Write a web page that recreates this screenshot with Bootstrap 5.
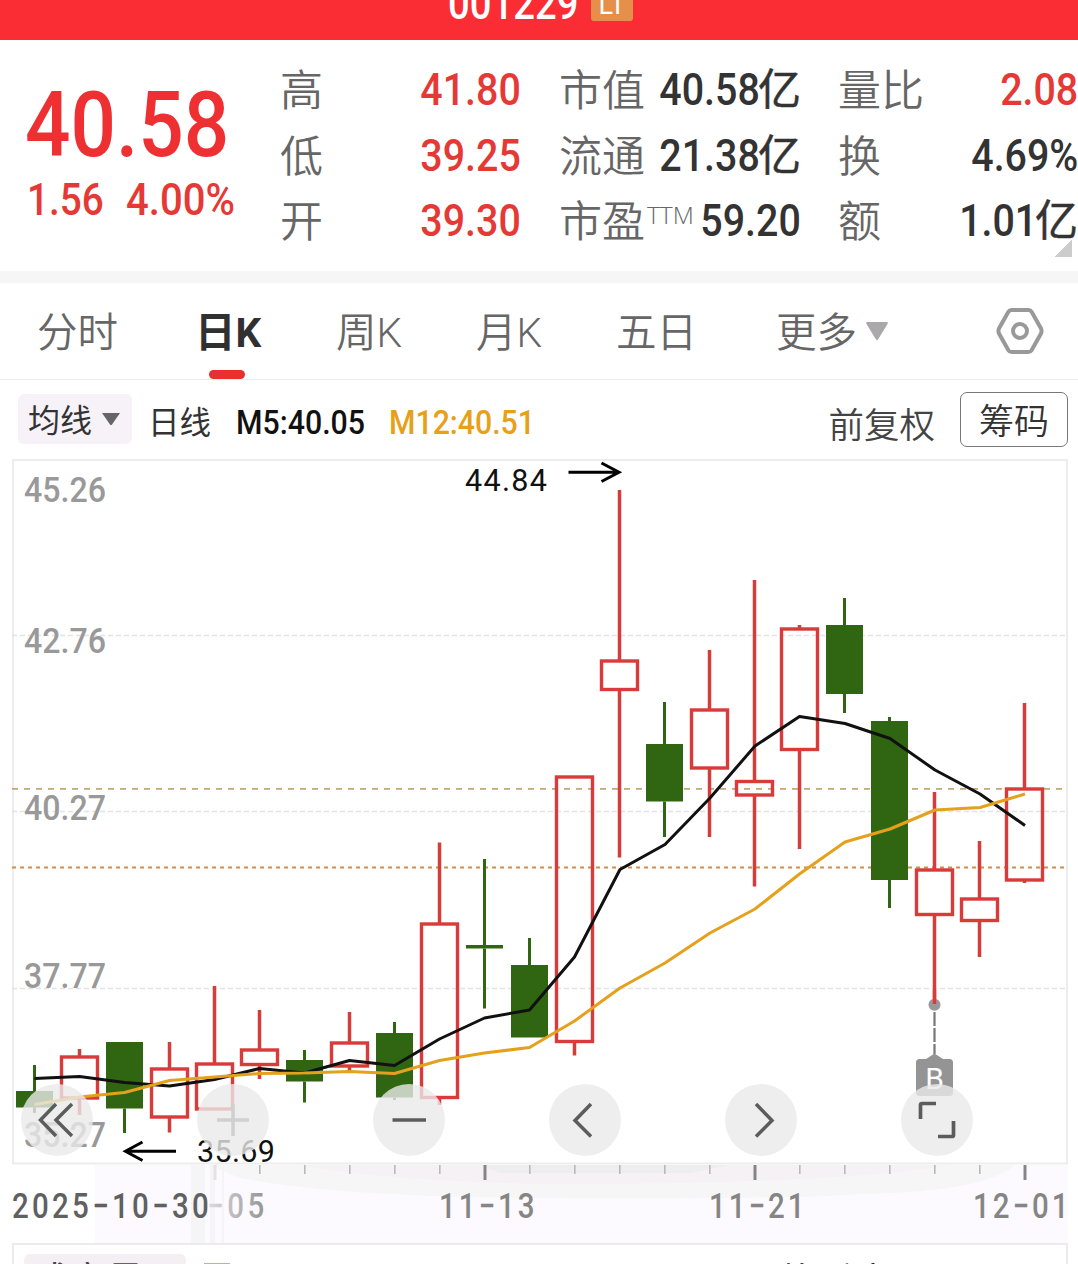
<!DOCTYPE html>
<html lang="zh-CN">
<head>
<meta charset="utf-8">
<meta name="viewport" content="width=device-width, initial-scale=1">
<title>001229</title>
<link href="https://cdn.jsdelivr.net/npm/bootstrap@5.3.0/dist/css/bootstrap.min.css" rel="stylesheet">
<style>
body{width:1078px;height:1264px;overflow:hidden;background:#fff;color:#333;font-family:Roboto,"Noto Sans CJK SC",sans-serif}
.topbar{height:40px;background:#f92d33;color:#fff}
.code{font-size:45px;line-height:52px;margin:-22px 0 0 448px;width:130px;white-space:nowrap}
.code .num{transform:scaleX(.85)}
.lt-tag{width:42px;height:26px;margin:-5px 0 0 13px;background:#e58f4a;border-radius:3px;font-size:27px;line-height:20px;text-align:center}
.num{display:inline-block;transform:scaleX(.89);transform-origin:right center;font-weight:500;white-space:nowrap}
.num-l{transform-origin:left center}
.up{color:#e53935}
.quote{height:231px}
.price-box{width:280px;padding:36px 0 0 25px}
.price{font-size:90px;line-height:100px;height:100px;color:#ef3032}
.chg{font-size:45px;line-height:48px;width:99px;padding-left:2px}
.stat-col{font-size:43px;padding-top:17px}
.stat-row{height:65.5px;line-height:65.5px;white-space:nowrap}
.stat-row .num{font-size:45px;transform:scaleX(.875)}
.k{color:#666;font-weight:350;position:relative;top:2px}
.v{font-weight:500}
.yi{font-weight:400;display:inline-block;margin-left:-2px;line-height:60px;-webkit-text-stroke:.5px #333}
.ttm{font-size:24.500px;line-height:23px;top:-13px;font-family:"Open Sans",sans-serif;font-weight:300;margin-left:2px}
.fold{width:17px;height:17px;right:6px;bottom:14px;background:linear-gradient(135deg,transparent 50%,#ccc 50%)}
.divide{height:12px;background:#f6f6f6}
.tabs-row{height:97px;border-bottom:1px solid #ececec;padding-left:37px;font-size:40.5px;line-height:101px;color:#666;font-weight:350}
.tab-now{color:#303030;font-weight:700;left:-2px}
.tab-now::after{content:"";position:absolute;left:14px;bottom:0;width:36px;height:9px;border-radius:5px;background:#e93030}
.tools{height:79px;font-size:32px;padding-right:10px}
.ma-pill{width:114px;height:50px;margin:14px 0 0 18px;padding-left:10px;border-radius:6px;background:#f6f2f7;line-height:54px}
.chip{width:108px;height:55px;margin-top:12px;border:1px solid #777;border-radius:7px;font-size:35px;line-height:60px;text-align:center}
.plot{height:784px}
.ctl-bar{left:21px;top:625px;gap:104px}
.ctl{width:72px;height:72px;border-radius:50%;border:0;padding:0;background:rgba(234,234,234,.8)}
.ctl svg{display:block}
.next-pane{height:21px;margin:0 10px 0 12px;border:solid #eceaec;border-width:2px 2px 0}
.pane-pill{width:162px;height:40px;margin:9px 0 0 10px;padding-left:9px;background:#f4eff3;border-radius:6px;font-size:37px;line-height:56px;color:#444}
svg text{font-family:Roboto,"Noto Sans",sans-serif}
</style>
<script src="https://cdn.jsdelivr.net/npm/bootstrap@5.3.0/dist/js/bootstrap.bundle.min.js"></script>
</head>
<body>
<header class="topbar d-flex overflow-hidden">
  <div class="code"><span class="num num-l">001229</span></div>
  <div class="lt-tag">LT</div>
</header>

<section class="quote d-flex position-relative">
  <div class="price-box flex-shrink-0">
    <div class="price"><span class="num num-l">40.58</span></div>
    <div class="d-flex up">
      <div class="chg"><span class="num num-l" style="transform:scaleX(.86)">1.56</span></div>
      <div class="chg"><span class="num num-l">4.00%</span></div>
    </div>
  </div>
  <div class="stat-col flex-shrink-0" style="width:241px">
    <div class="stat-row d-flex justify-content-between"><span class="k">高</span><span class="num up">41.80</span></div>
    <div class="stat-row d-flex justify-content-between"><span class="k">低</span><span class="num up">39.25</span></div>
    <div class="stat-row d-flex justify-content-between"><span class="k">开</span><span class="num up">39.30</span></div>
  </div>
  <div class="stat-col flex-shrink-0" style="width:242px;margin-left:38px">
    <div class="stat-row d-flex justify-content-between"><span class="k">市值</span><span class="v"><span class="num">40.58</span><span class="yi">亿</span></span></div>
    <div class="stat-row d-flex justify-content-between"><span class="k">流通</span><span class="v"><span class="num">21.38</span><span class="yi">亿</span></span></div>
    <div class="stat-row d-flex justify-content-between"><span class="k">市盈<span class="ttm position-relative">TTM</span></span><span class="num" style="margin-left:-20px">59.20</span></div>
  </div>
  <div class="stat-col flex-shrink-0" style="width:240px;margin-left:37px">
    <div class="stat-row d-flex justify-content-between"><span class="k">量比</span><span class="num up">2.08</span></div>
    <div class="stat-row d-flex justify-content-between"><span class="k">换</span><span class="num">4.69%</span></div>
    <div class="stat-row d-flex justify-content-between"><span class="k">额</span><span class="v"><span class="num">1.01</span><span class="yi">亿</span></span></div>
  </div>
  <i class="fold position-absolute"></i>
</section>
<div class="divide"></div>

<nav class="tabs-row d-flex text-nowrap">
  <div style="width:160px">分时</div>
  <div style="width:139px" class="tab-now position-relative">日K</div>
  <div style="width:140px">周K</div>
  <div style="width:140px">月K</div>
  <div style="width:160px">五日</div>
  <div style="width:220px" class="d-flex align-items-start"><span>更多</span><svg width="24" height="20" style="margin:38px 0 0 8px"><path d="M2 1H22Q23.500 1 22.500 3L13 18.500Q12 20 11 18.500L1.500 3Q.5 1 2 1Z" fill="#aaa8aa"/></svg></div>
  <svg width="48" height="46" viewBox="0 0 48 46" style="margin-top:25px" fill="none" stroke="#999" stroke-width="4"><path d="M15.500 2H32.500Q34.500 2 35.600 3.800L45 20.500Q46.200 23 45 25.500L35.600 42.200Q34.500 44 32.500 44H15.500Q13.500 44 12.400 42.200L3 25.500Q1.800 23 3 20.500L12.400 3.800Q13.500 2 15.500 2Z"/><circle cx="24" cy="23" r="7"/></svg>
</nav>

<div class="tools d-flex text-nowrap">
  <div class="ma-pill d-flex"><span>均线</span><svg width="20" height="14" style="margin:18px 0 0 9px"><path d="M1 1H19L11 12.500Q10 13.500 9 12.500Z" fill="#666"/></svg></div>
  <div style="margin:20px 0 0 16px;width:89px;font-size:31.500px">日线</div>
  <svg width="310" height="60" style="margin-top:12px" font-size="33" font-weight="500"><text x="-1" y="42" textLength="129" lengthAdjust="spacingAndGlyphs" fill="#111">M5:40.05</text><text x="152" y="42" textLength="146" lengthAdjust="spacingAndGlyphs" fill="#e6a117">M12:40.51</text></svg>
  <div class="ms-auto" style="font-size:35.500px;margin-top:20px;margin-right:25px;color:#444;font-weight:350">前复权</div>
  <div class="chip" style="font-weight:350">筹码</div>
</div>

<main class="plot position-relative">
  <svg class="d-block" width="1078" height="784" viewBox="0 459 1078 784">
    <path d="M95 1165H1068V1243H95Z" fill="#fdfaff"/>
    <path d="M208 1165H1015Q985 1192 860 1194Q780 1200 520 1198Q330 1196 240 1178Z" fill="#f6f6f6"/>
    <path d="M300 1165H950Q840 1184 540 1184Q380 1180 300 1165Z" fill="#f5f1f5"/>
    <path d="M480 1165H730L690 1173H500Z" fill="#efeeef"/>
    <path d="M191 1165H205V1243H191ZM210 1165H215V1243H210ZM222 1165H224V1243H222Z" fill="#f5f4f6"/>
    <rect x="13" y="460" width="1054" height="703.500" fill="#fff" stroke="#ededed" stroke-width="2"/>
    <g stroke="#e3e3e3" stroke-width="1.300" stroke-dasharray="5 3"><path d="M12 635.500H1066M12 811.500H1066M12 988.500H1066"/></g>
    <path d="M12 788.800H1066" stroke="#c2a873" stroke-width="1.800" stroke-dasharray="6 6"/>
    <path d="M12 867.600H1066" stroke="#cd9048" stroke-width="2" stroke-dasharray="4 4"/>
    <g fill="#999" font-size="35.500" font-weight="500">
      <text x="24" y="502" textLength="82" lengthAdjust="spacingAndGlyphs">45.26</text>
      <text x="24" y="653" textLength="82" lengthAdjust="spacingAndGlyphs">42.76</text>
      <text x="24" y="820" textLength="82" lengthAdjust="spacingAndGlyphs">40.27</text>
      <text x="24" y="988" textLength="82" lengthAdjust="spacingAndGlyphs">37.77</text>
      <text x="24" y="1147" textLength="82" lengthAdjust="spacingAndGlyphs">35.27</text>
    </g>
    <g id="candles" stroke-width="3.400" fill="none"></g>
    <path fill="none" stroke="#111" stroke-width="3" stroke-linejoin="round" d="M34.500 1078.500L79.500 1076.500L124.500 1082.500L169.500 1086L214.500 1079.500L259.500 1068.500L304.500 1073L349.500 1060.500L394.500 1065.500L439.500 1039L484.500 1018L529.500 1010L574.500 957L620 869.500L665 844.500L710 798L755 746L799.500 716.500L845 723.500L890 738.500L935 770L980 794L1025 825.500"/>
    <path fill="none" stroke="#e5a01c" stroke-width="3" stroke-linejoin="round" d="M34.500 1104.500L79.500 1097L124.500 1092.500L169.500 1080.500L214.500 1077L259.500 1073.500L304.500 1073L349.500 1071.500L394.500 1073.500L439.500 1060.500L484.500 1053L529.500 1047.500L574.500 1021L620 988L665 963L710 933L755 909L799.500 874L845 842L890 829L935 810L980 807.500L1025 794"/>
    <g fill="none" stroke="#000" stroke-width="3"><path d="M568.500 472.300H618M601.500 463L619 472.300L601.500 481.500"/><path d="M176 1151.300H126M142.500 1142L125.500 1151.300L142.500 1160.500"/></g>
    <g fill="#111" font-size="30.500"><text x="465" y="490.500" textLength="82" lengthAdjust="spacing">44.84</text><text x="197" y="1161.500" textLength="78" lengthAdjust="spacing">35.69</text></g>
    <circle cx="934.500" cy="1004.800" r="6" fill="#999"/><path d="M934.500 990V1004" stroke="#d93b3a" stroke-width="3.400"/>
    <path d="M934.500 1012V1054" stroke="#777" stroke-width="2.200" stroke-dasharray="14 2"/>
    <path d="M934.500 1053.500L943 1059H949.500Q953 1059 953 1062.500V1092.500Q953 1096 949.500 1096H919.500Q916 1096 916 1092.500V1062.500Q916 1059 919.500 1059H926Z" fill="#949494"/>
    <text x="934.700" y="1088.500" font-size="30" text-anchor="middle" fill="#fff">B</text>
    <path stroke="#b9b9b9" stroke-width="1.600" d="M259.800 1165v9M304.800 1165v9M349.800 1165v9M394.800 1165v9M439.800 1165v9M529.800 1165v9M574.800 1165v9M619.800 1165v9M664.800 1165v9M709.800 1165v9M799.800 1165v9M844.800 1165v9M889.800 1165v9M934.800 1165v9M979.800 1165v9"/>
    <path stroke="#858585" stroke-width="3" d="M485 1165v15M755 1165v15M1025 1165v15"/><path stroke="#e4e2e4" stroke-width="3" d="M215 1165v15"/>
    <linearGradient id="fade" gradientUnits="userSpaceOnUse" x1="0" y1="0" x2="66" y2="0"><stop stop-color="#ddd"/><stop offset="1" stop-color="#999"/></linearGradient>
    <g font-size="35.500" fill="#858585" font-weight="500">
      <text transform="translate(12 1218) scale(.83 1)" textLength="237" fill="#606060">2025−10−30</text>
      <text transform="translate(207 1218) scale(.83 1)" textLength="69" fill="url(#fade)">−05</text>
      <text transform="translate(439 1218) scale(.83 1)" textLength="115">11−13</text>
      <text transform="translate(709 1218) scale(.83 1)" textLength="115">11−21</text>
      <text transform="translate(973 1218) scale(.83 1)" textLength="115">12−01</text>
    </g>
  </svg>
  <div class="ctl-bar position-absolute d-flex">
    <button class="ctl" aria-label="最早"><svg width="72" height="72" fill="none" stroke="#5c5c5c" stroke-width="3.500"><path d="M35 20L19.500 36L35 52M51 20L35 36L51 52"/></svg></button>
    <button class="ctl" aria-label="放大"><svg width="72" height="72" stroke="#d0d0d0" stroke-width="3.500"><path d="M20 36H52M36 20V52"/></svg></button>
    <button class="ctl" aria-label="缩小"><svg width="72" height="72" stroke="#5c5c5c" stroke-width="3.500"><path d="M19.500 36H53"/></svg></button>
    <button class="ctl" aria-label="左移"><svg width="72" height="72" fill="none" stroke="#5c5c5c" stroke-width="3.500"><path d="M42 20L26 36.500L42 52.500"/></svg></button>
    <button class="ctl" aria-label="右移"><svg width="72" height="72" fill="none" stroke="#5c5c5c" stroke-width="3.500"><path d="M31 20L47 36.500L31 52.500"/></svg></button>
    <button class="ctl" aria-label="全屏"><svg width="72" height="72" fill="none" stroke="#5c5c5c" stroke-width="3.700"><path d="M35 19.500H21Q19.500 19.500 19.500 21V35M37 52.500H51Q52.500 52.500 52.500 51V37"/></svg></button>
  </div>
</main>

<section class="next-pane d-flex overflow-hidden">
  <div class="pane-pill text-nowrap">成交量</div>
  <div style="width:26px;height:10px;margin:18px 0 0 18px;background:#dda0a3"></div>
  <div style="margin:15px 0 0 551px;font-size:37px;line-height:46px;color:#222" class="text-nowrap">换手率</div>
</section>

<script>
// Each candle: [direction, high, body top, body bottom, low]; one candle every 45px
const data=[['d',1065,1091,1107.5,1113],['u',1049,1057,1098,1115],['d',1042,1042,1108.5,1133],['u',1042,1069,1117,1132.5],['u',986,1064,1109,1109],['u',1010,1050,1064.5,1079],['d',1050,1060,1081.5,1102.5],['u',1012,1043,1066,1071],['d',1022,1033,1097.5,1100],['u',842.5,924,1097.5,1105],['d',859,945,948.5,1008.5],['d',938,965,1037.5,1037.5],['u',777,777,1041.5,1055.5],['u',490,661,689.5,857.5],['d',702,744,801.5,837],['u',650,710,768,837],['u',580,781.5,795,886.5],['u',625,629,749.5,849],['d',598,625,694,713],['d',717,721,880,908],['u',792,870,914.5,1003],['u',841,899,920.5,957],['u',703,789,880,883]];
document.getElementById('candles').innerHTML=data.map(([dir,h,t,b,l],i)=>{
  const x=34.5+45*i,up=dir==='u';
  const wick=`<path d="M${x} ${h}V${t}M${x} ${b}V${l}" stroke="${up?'#d53d3b':'#306612'}" stroke-width="${up?3.5:3}"/>`;
  return wick+(up?`<rect x="${x-18}" y="${t}" width="36" height="${b-t}" stroke="#d93b3a"/>`:`<rect x="${x-18.5}" y="${t}" width="37" height="${b-t}" fill="#306612"/>`);
}).join('');
</script>
</body>
</html>
